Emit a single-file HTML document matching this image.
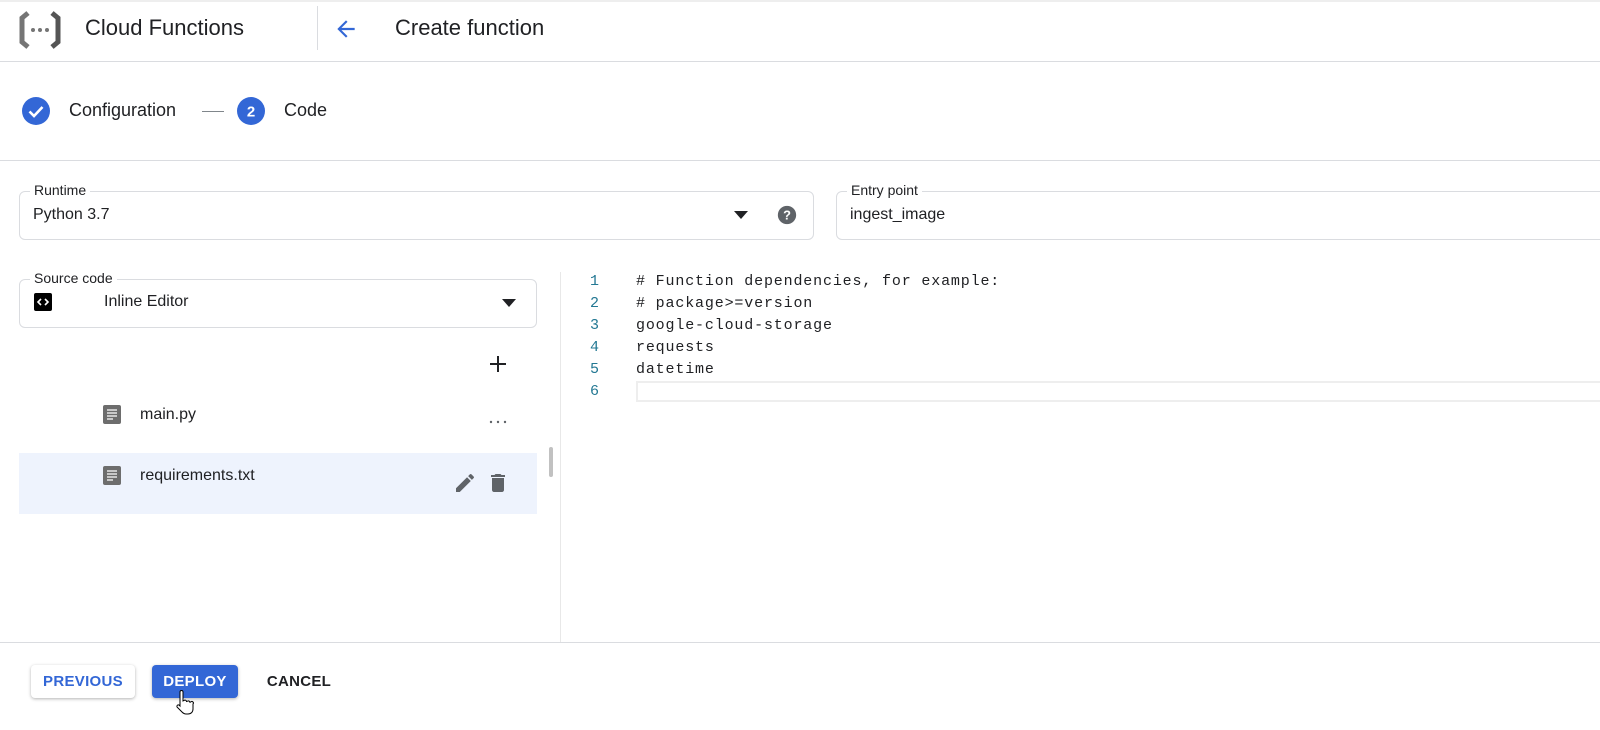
<!DOCTYPE html>
<html><head><meta charset="utf-8"><style>
*{box-sizing:border-box;margin:0;padding:0}
body{width:1600px;height:730px;overflow:hidden;background:#fff;font-family:"Liberation Sans",sans-serif;color:#202124;position:relative}
.abs{position:absolute}
.hline{position:absolute;left:0;width:1600px;height:1px;background:#dadce0}
.field{position:absolute;border:1px solid #dadce0;border-radius:6px}
.lbl{position:absolute;top:-10px;left:10px;background:#fff;padding:0 4px;font-size:14px;color:#202124}
.val{position:absolute;font-size:16px;color:#202124}
.code{position:absolute;left:636px;font-family:"Liberation Mono",monospace;font-size:15px;letter-spacing:.84px;color:#202124;line-height:22px;white-space:pre}
.ln{position:absolute;left:590px;width:12px;text-align:left;font-family:"Liberation Mono",monospace;font-size:15px;color:#237893;line-height:22px}
.btn{position:absolute;top:665px;height:33px;font-size:15px;font-weight:bold;display:flex;align-items:center;justify-content:center;border-radius:4px;letter-spacing:.3px}
</style></head><body>
<div class="hline" style="top:0;background:#eee;height:2px"></div>
<svg class="abs" style="left:18px;top:10px" width="44" height="40" viewBox="0 0 44 40">
<path d="M10 3 L4 8 V32 L10 37" fill="none" stroke="#757575" stroke-width="5"/>
<path d="M34 3 L40 8 V32 L34 37" fill="none" stroke="#555" stroke-width="5"/>
<circle cx="15" cy="20" r="2" fill="#757575"/><circle cx="22" cy="20" r="2" fill="#757575"/><circle cx="29" cy="20" r="2" fill="#757575"/>
</svg>
<div class="abs" style="left:85px;top:15px;font-size:22px">Cloud Functions</div>
<div class="abs" style="left:317px;top:6px;width:1px;height:44px;background:#dadce0"></div>
<svg class="abs" style="left:333px;top:16px" width="26" height="26" viewBox="0 0 24 24"><path d="M20 11H7.8l5.6-5.6L12 4l-8 8 8 8 1.4-1.4L7.8 13H20z" fill="#3367d6"/></svg>
<div class="abs" style="left:395px;top:15px;font-size:22px">Create function</div>
<div class="hline" style="top:61px"></div>
<svg class="abs" style="left:22px;top:97px" width="28" height="28" viewBox="0 0 28 28"><circle cx="14" cy="14" r="14" fill="#3367d6"/><path d="M7.5 14.5l4.5 4.5 8.5-9" fill="none" stroke="#fff" stroke-width="2.6"/></svg>
<div class="abs" style="left:69px;top:100px;font-size:18px">Configuration</div>
<div class="abs" style="left:202px;top:111px;width:22px;height:1px;background:#80868b"></div>
<svg class="abs" style="left:237px;top:97px" width="28" height="28"><circle cx="14" cy="14" r="14" fill="#3367d6"/><text x="14" y="19.5" text-anchor="middle" font-family="Liberation Sans" font-weight="bold" font-size="15" fill="#fff">2</text></svg>
<div class="abs" style="left:284px;top:100px;font-size:18px">Code</div>
<div class="hline" style="top:160px"></div>

<div class="field" style="left:19px;top:191px;width:795px;height:49px"><span class="lbl">Runtime</span></div>
<div class="val" style="left:33px;top:206px">Python 3.7</div>
<svg class="abs" style="left:733px;top:210px" width="16" height="10"><path d="M1 1h14l-7 8z" fill="#202124"/></svg>
<svg class="abs" style="left:776px;top:204px" width="22" height="22" viewBox="0 0 24 24"><circle cx="12" cy="12" r="10" fill="#5f6368"/><text x="12" y="17" text-anchor="middle" font-family="Liberation Sans" font-weight="bold" font-size="14" fill="#fff">?</text></svg>
<div class="field" style="left:836px;top:191px;width:800px;height:49px"><span class="lbl">Entry point</span></div>
<div class="val" style="left:850px;top:206px">ingest_image</div>

<div class="field" style="left:19px;top:279px;width:518px;height:49px"><span class="lbl">Source code</span></div>
<svg class="abs" style="left:34px;top:293px" width="18" height="18" viewBox="0 0 18 18"><rect width="18" height="18" rx="2" fill="#000"/><path d="M7 6l-3 3 3 3M11 6l3 3-3 3" fill="none" stroke="#fff" stroke-width="1.6"/></svg>
<div class="val" style="left:104px;top:293px">Inline Editor</div>
<svg class="abs" style="left:501px;top:298px" width="16" height="10"><path d="M1 1h14l-7 8z" fill="#202124"/></svg>
<svg class="abs" style="left:488px;top:354px" width="20" height="20"><path d="M10 2v16M2 10h16" stroke="#202124" stroke-width="2"/></svg>
<svg class="abs" style="left:102px;top:404px" width="20" height="20" viewBox="0 0 20 20"><rect x="1" y="1" width="18" height="19" rx="2" fill="#6d6d6d"/><path d="M5 6h10M5 9h10M5 12h10M5 15h6" stroke="#fff" stroke-width="1.3"/></svg>
<div class="val" style="left:140px;top:406px">main.py</div>
<svg class="abs" style="left:489px;top:419px" width="20" height="6"><circle cx="2" cy="3" r="1.2" fill="#5f6368"/><circle cx="9" cy="3" r="1.2" fill="#5f6368"/><circle cx="16" cy="3" r="1.2" fill="#5f6368"/></svg>
<div class="abs" style="left:19px;top:453px;width:518px;height:61px;background:#eef3fd"></div>
<svg class="abs" style="left:102px;top:465px" width="20" height="20" viewBox="0 0 20 20"><rect x="1" y="1" width="18" height="19" rx="2" fill="#6d6d6d"/><path d="M5 6h10M5 9h10M5 12h10M5 15h6" stroke="#fff" stroke-width="1.3"/></svg>
<div class="val" style="left:140px;top:467px">requirements.txt</div>
<svg class="abs" style="left:453px;top:471px" width="24" height="24" viewBox="0 0 24 24"><path d="M3 17.25V21h3.75L17.81 9.94l-3.75-3.75L3 17.25zM20.71 7.04a1 1 0 000-1.41l-2.34-2.34a1 1 0 00-1.41 0l-1.83 1.83 3.75 3.75 1.83-1.83z" fill="#5f6368"/></svg>
<svg class="abs" style="left:486px;top:471px" width="24" height="24" viewBox="0 0 24 24"><path d="M6 19c0 1.1.9 2 2 2h8c1.1 0 2-.9 2-2V7H6v12zM19 4h-3.5l-1-1h-5l-1 1H5v2h14V4z" fill="#5f6368"/></svg>
<div class="abs" style="left:549px;top:447px;width:4px;height:30px;background:#c1c1c1;border-radius:2px"></div>
<div class="abs" style="left:560px;top:272px;width:1px;height:370px;background:#e8e8e8"></div>

<div class="ln" style="top:271px">1<br>2<br>3<br>4<br>5<br>6</div>
<div class="code" style="top:271px"># Function dependencies, for example:
# package>=version
google-cloud-storage
requests
datetime</div>
<div class="abs" style="left:636px;top:381px;width:970px;height:21px;border:2px solid #eee;border-right:none"></div>

<div class="hline" style="top:642px"></div>
<div class="btn" style="left:31px;width:104px;color:#3367d6;background:#fff;box-shadow:0 1px 3px rgba(0,0,0,.3)">PREVIOUS</div>
<div class="btn" style="left:152px;width:86px;color:#fff;background:#3367d6;box-shadow:0 1px 3px rgba(0,0,0,.3)">DEPLOY</div>
<div class="btn" style="left:256px;width:86px;color:#202124">CANCEL</div>
<svg class="abs" style="left:174px;top:690px" width="22" height="26" viewBox="0 0 22 26"><path d="M6 2a1.5 1.5 0 013 0v9l1-.5a1.5 1.5 0 012.5 1l1-.3a1.5 1.5 0 012.4 1l.8-.2A1.5 1.5 0 0119 14v5c0 3-2 5-5 5h-2c-2 0-3-1-4-2l-5-5a1.5 1.5 0 012-2l1 1z" fill="#fff" stroke="#000" stroke-width="1"/></svg>
</body></html>
